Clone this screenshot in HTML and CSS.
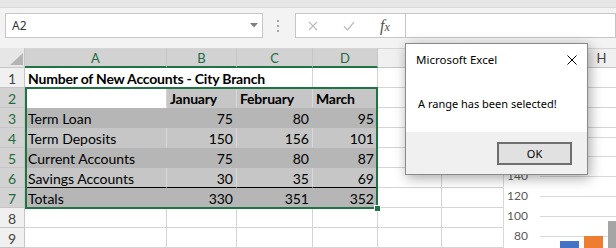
FILE: index.html
```html
<!DOCTYPE html>
<html>
<head>
<meta charset="utf-8">
<link rel="stylesheet" href="styles.css">
</head>
<body>
<div class="app">
  <div class="ribbon-edge"></div>
  <div class="fbar">
    <div class="namebox"><span>A2</span><svg width="8" height="5" viewBox="0 0 8 5"><path d="M0 0H8L4 4.5Z" fill="#7f7f7f"/></svg></div>
    <div class="grip"><i></i><i></i><i></i></div>
    <div class="fx-btns">
      <svg width="10" height="10" viewBox="0 0 10 10"><path d="M1 1L9 9M9 1L1 9" stroke="#bdbdbd" stroke-width="1.2" fill="none"/></svg>
      <svg width="12" height="10" viewBox="0 0 12 10"><path d="M1 5.5L4.5 9L11 1" stroke="#bdbdbd" stroke-width="1.2" fill="none"/></svg>
      <span class="fx">f<span class="fx-x">x</span></span>
    </div>
    <div class="finput"></div>
  </div>

  <div class="sheet">
    <div class="c h corner"><svg width="13" height="12" viewBox="0 0 13 12"><path d="M13 0V12H0Z" fill="#b4b4b4"/></svg></div>
    <div class="c h col hs">A</div>
    <div class="c h col hs">B</div>
    <div class="c h col hs">C</div>
    <div class="c h col hs">D</div>
    <div class="c h col"></div>
    <div class="c h col"></div>
    <div class="c h col"></div>
    <div class="c h col">H</div>

    <div class="c h rh">1</div>
    <div class="c b span3">Number of New Accounts - City Branch</div>
    <div class="c"></div><div class="c"></div><div class="c"></div><div class="c"></div><div class="c"></div>

    <div class="c h rh hs">2</div>
    <div class="c act"></div>
    <div class="c s b">January</div>
    <div class="c s b">February</div>
    <div class="c s b">March</div>
    <div class="c"></div><div class="c"></div><div class="c"></div><div class="c"></div>

    <div class="c h rh hs">3</div>
    <div class="c f">Term Loan</div>
    <div class="c f n">75</div>
    <div class="c f n">80</div>
    <div class="c f n">95</div>
    <div class="c"></div><div class="c"></div><div class="c"></div><div class="c"></div>

    <div class="c h rh hs">4</div>
    <div class="c s">Term Deposits</div>
    <div class="c s n">150</div>
    <div class="c s n">156</div>
    <div class="c s n">101</div>
    <div class="c"></div><div class="c"></div><div class="c"></div><div class="c"></div>

    <div class="c h rh hs">5</div>
    <div class="c f">Current Accounts</div>
    <div class="c f n">75</div>
    <div class="c f n">80</div>
    <div class="c f n">87</div>
    <div class="c"></div><div class="c"></div><div class="c"></div><div class="c"></div>

    <div class="c h rh hs">6</div>
    <div class="c s tl">Savings Accounts</div>
    <div class="c s n tl">30</div>
    <div class="c s n tl">35</div>
    <div class="c s n tl">69</div>
    <div class="c"></div><div class="c"></div><div class="c"></div><div class="c"></div>

    <div class="c h rh hs">7</div>
    <div class="c f">Totals</div>
    <div class="c f n">330</div>
    <div class="c f n">351</div>
    <div class="c f n">352</div>
    <div class="c"></div><div class="c"></div><div class="c"></div><div class="c"></div>

    <div class="c h rh">8</div>
    <div class="c"></div><div class="c"></div><div class="c"></div><div class="c"></div><div class="c"></div><div class="c"></div><div class="c"></div><div class="c"></div>

    <div class="c h rh">9</div>
    <div class="c"></div><div class="c"></div><div class="c"></div><div class="c"></div><div class="c"></div><div class="c"></div><div class="c"></div><div class="c"></div>
  </div>

  <div class="selection"><span class="handle"></span></div>

  <div class="chart">
    <div class="axis">
      <div class="tick"><span></span><i></i></div>
      <div class="tick"><span>140</span><i></i></div>
      <div class="tick"><span>120</span><i></i></div>
      <div class="tick"><span>100</span><i></i></div>
      <div class="tick"><span>80</span><i></i></div>
    </div>
    <div class="bars">
      <div class="bar blue" style="height:75px"></div>
      <div class="bar orange" style="height:80px"></div>
      <div class="bar gray" style="height:95px"></div>
    </div>
  </div>

  <div class="dialog">
    <div class="dlg-title">
      <span>Microsoft Excel</span>
      <svg width="10" height="10" viewBox="0 0 10 10"><path d="M0.5 0.5L9.5 9.5M9.5 0.5L0.5 9.5" stroke="#000" stroke-width="1" fill="none"/></svg>
    </div>
    <div class="dlg-body">A range has been selected!</div>
    <div class="dlg-foot"><div class="ok">OK</div></div>
  </div>
</div>
</body>
</html>
```

FILE: styles.css
```css
* { box-sizing: border-box; margin: 0; padding: 0; }
html, body { width: 616px; height: 248px; overflow: hidden; background: #fff; }
body { font-family: "Lato", "Liberation Sans", sans-serif; }
.app { position: relative; width: 616px; height: 248px; overflow: hidden; }

.ribbon-edge { height: 8px; background: #e6e6e6; border-bottom: 1px solid #dadada; }
.fbar { height: 40px; background: #f3f3f3; display: flex; align-items: flex-start; padding-top: 5px; }
.namebox {
  margin-left: 5px; width: 258px; height: 25px; border: 1px solid #c6c6c6; background: #fff;
  display: flex; align-items: center; justify-content: space-between; padding: 0 4px 0 6px;
  font: 12px "Noto Sans", sans-serif; color: #333;
}
.grip { margin: 0 16px 0 14px; height: 25px; display: flex; flex-direction: column; justify-content: center; gap: 3px; }
.grip i { display: block; width: 2px; height: 2px; background: #a6a6a6; }
.fx-btns {
  width: 111px; height: 25px; border: 1px solid #c6c6c6; background: #fff;
  display: flex; align-items: center; gap: 25px; padding-left: 12px;
}
.fx { font: italic 16px "Liberation Serif", serif; color: #505050; line-height: 1; }
.fx-x { font-size: 12px; }
.finput { flex: 1; height: 25px; border: 1px solid #c6c6c6; border-left: none; background: #fff; }

.sheet {
  display: grid;
  grid-template-columns: 25px 142px 70px 76px 65px 64px 64px 64px 64px;
  grid-auto-rows: 20px;
  width: 634px;
}
.c {
  border-right: 1px solid #d4d4d4; border-bottom: 1px solid #d4d4d4;
  display: flex; align-items: center; padding: 3px 3px 0 3px;
  font-size: 14px; color: #000; white-space: nowrap; line-height: 1;
}
.span3 { grid-column: span 3; }
.h { background: #f0f0f0; border-color: #c6c6c6; justify-content: center; color: #444; font-size: 13px; padding: 2px 0 0 0; }
.col { box-shadow: inset 0 1px 0 #d5d5d5; }
.hs { background: #d2d2d2; color: #1f6b41; }
.col.hs { border-bottom: 2px solid #217346; }
.corner { background: #e6e6e6; align-items: flex-end; justify-content: flex-end; padding: 0 1px 2px 0; }
.corner svg { display: block; }
.rh { font-size: 14px; }

.s { background: #c6c6c6; border-right-color: #d9d9d9; border-bottom-color: transparent; }
.f { background: #b6b6b6; border-right-color: transparent; border-bottom-color: transparent; }
.act { border-bottom-color: transparent; }
.n { justify-content: flex-end; }
.b { font-weight: 700; letter-spacing: -0.2px; }
.tl { border-bottom-color: #000; }

.selection { position: absolute; left: 25px; top: 87px; width: 353px; height: 122px; border: 2px solid #217346; }
.handle { position: absolute; right: -5px; bottom: -5px; width: 7px; height: 7px; background: #217346; border: 1px solid #fff; }

.chart { position: absolute; left: 503px; top: 137px; width: 200px; height: 180px; border: 1px solid #d9d9d9; background: #fff; }
.axis { padding-top: 8px; }
.tick { height: 20px; display: flex; align-items: center; }
.tick span { width: 24px; text-align: right; font-size: 12px; color: #595959; line-height: 1; }
.tick i { display: block; flex: 1; height: 1px; background: #d9d9d9; margin-left: 12px; }
.bars { position: absolute; left: 56px; bottom: 0; display: flex; align-items: flex-end; gap: 5px; }
.bar { width: 19px; }
.blue { background: #4472c4; }
.orange { background: #ed7d31; }
.gray { background: #a5a5a5; }

.dialog {
  position: absolute; left: 405px; top: 43px; width: 183px; height: 132px;
  border: 1px solid #8a8a8a; background: #fff; box-shadow: 2px 3px 12px rgba(0,0,0,.35);
  display: flex; flex-direction: column; font-family: "Noto Sans", sans-serif; font-size: 11px; color: #000;
}
.dlg-title { height: 31px; display: flex; align-items: center; justify-content: space-between; padding: 0 10px; font-size: 11.5px; }
.dlg-title svg { display: block; }
.dlg-body { flex: 1; display: flex; align-items: center; padding-left: 12px; }
.dlg-foot { height: 42px; background: #f0f0f0; display: flex; justify-content: flex-end; align-items: flex-start; padding: 10px 15px 0 0; }
.ok { width: 75px; height: 23px; border: 2px solid #6f6f6f; background: #e1e1e1; display: flex; align-items: center; justify-content: center; font-size: 11px; }
```
